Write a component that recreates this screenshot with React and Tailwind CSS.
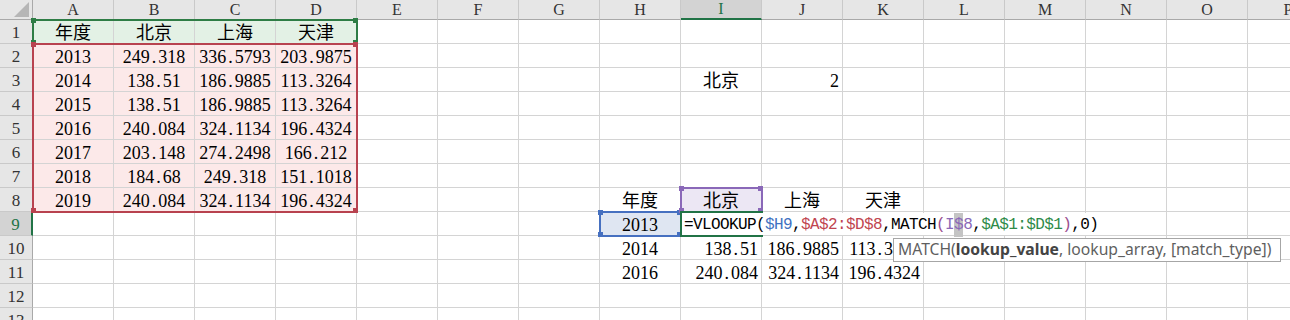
const COLS = ["A", "B", "C", "D", "E", "F", "G", "H", "I", "J", "K", "L", "M", "N", "O", "P"];
const ROWS = [1, 2, 3, 4, 5, 6, 7, 8, 9, 10, 11, 12, 13];

const COL_W = 81;
const ROW_H = 24;
const HEAD_W = 33;
const HEAD_H = 20;

const table = [
  ["年度", "北京", "上海", "天津"],
  ["2013", "249.318", "336.5793", "203.9875"],
  ["2014", "138.51", "186.9885", "113.3264"],
  ["2015", "138.51", "186.9885", "113.3264"],
  ["2016", "240.084", "324.1134", "196.4324"],
  ["2017", "203.148", "274.2498", "166.212"],
  ["2018", "184.68", "249.318", "151.1018"],
  ["2019", "240.084", "324.1134", "196.4324"],
];

const cells = {};
table.forEach((row, r) => {
  row.forEach((v, c) => {
    cells[COLS[c] + (r + 1)] = { v, align: "center", bg: r === 0 ? "bg-[#e3f1e5]" : "bg-[#fce9e9]" };
  });
});
Object.assign(cells, {
  I3: { v: "北京", align: "center" },
  J3: { v: "2", align: "right" },
  H8: { v: "年度", align: "center" },
  I8: { v: "北京", align: "center", bg: "bg-[#ece7f4]" },
  J8: { v: "上海", align: "center" },
  K8: { v: "天津", align: "center" },
  H9: { v: "2013", align: "center", bg: "bg-[#dfe6f2]" },
  H10: { v: "2014", align: "center" },
  I10: { v: "138.51", align: "right" },
  J10: { v: "186.9885", align: "right" },
  K10: { v: "113.3264", align: "right" },
  H11: { v: "2016", align: "center" },
  I11: { v: "240.084", align: "right" },
  J11: { v: "324.1134", align: "right" },
  K11: { v: "196.4324", align: "right" },
});

// coloured boxes that Excel draws round the ranges named in the formula
function RangeBox({ col, row, w, h, color }) {
  const x = HEAD_W + col * COL_W - 1;
  const y = HEAD_H + row * ROW_H - 1;
  const width = w * COL_W + 1;
  const height = h * ROW_H + 1;
  const corners = [
    [x - 1, y - 1],
    [x + width - 4, y - 1],
    [x - 1, y + height - 4],
    [x + width - 4, y + height - 4],
  ];
  return (
    <>
      <div
        className="absolute border-2"
        style={{ left: x, top: y, width: width + 1, height: height + 1, borderColor: color }}
      />
      {corners.map(([cx, cy], i) => (
        <div key={i} className="absolute h-[5px] w-[5px]" style={{ left: cx, top: cy, background: color }} />
      ))}
    </>
  );
}

function Num({ v }) {
  const i = v.indexOf(".");
  if (i < 0) return v;
  return (
    <>
      {v.slice(0, i)}
      <span className="px-[2px]">.</span>
      {v.slice(i + 1)}
    </>
  );
}

function Cell({ id }) {
  const c = cells[id];
  const justify = c?.align === "right" ? "justify-end pr-[3px]" : "justify-center";
  return (
    <div
      className={`flex items-center overflow-hidden whitespace-nowrap border-r border-b border-[#d4d4d4] pt-[2px] text-[18px] leading-none text-black ${justify} ${c?.bg || "bg-white"}`}
    >
      {c && <Num v={c.v} />}
    </div>
  );
}

export default function App() {
  return (
    <div className="relative h-[320px] w-[1290px] overflow-hidden bg-white font-['Liberation_Serif','Noto_Sans_CJK_SC',serif]">
      <div className="grid grid-cols-[33px_repeat(16,81px)] grid-rows-[20px_repeat(13,24px)]">
        {/* select-all corner */}
        <div className="relative border-r border-b border-[#a9a9a9] bg-[#e6e6e6]">
          <svg className="absolute right-[2px] bottom-[2px]" width="16" height="15" viewBox="0 0 16 15">
            <polygon points="15,0 15,15 0,15" fill="#b6b6b6" />
          </svg>
        </div>
        {COLS.map((c) => (
          <div
            key={c}
            className={`flex items-center justify-center border-r border-r-[#c9c9c9] text-[16px] leading-none ${
              c === "I"
                ? "border-b-2 border-b-[#217346] bg-[#d3d3d3] text-[#217346]"
                : "border-b border-b-[#a9a9a9] bg-[#e6e6e6] text-[#333]"
            }`}
          >
            {c}
          </div>
        ))}
        {ROWS.map((r) => (
          <div key={r} className="contents">
            <div
              className={`flex items-center justify-center border-b border-b-[#c9c9c9] pt-[2px] text-[17px] leading-none ${
                r === 9
                  ? "border-r-2 border-r-[#217346] bg-[#d3d3d3] text-[#217346]"
                  : "border-r border-r-[#a9a9a9] bg-[#e6e6e6] text-[#333]"
              }`}
            >
              {r}
            </div>
            {COLS.map((c) => (
              <Cell key={c} id={c + r} />
            ))}
          </div>
        ))}
      </div>

      <RangeBox col={0} row={0} w={4} h={1} color="#2e7d45" />
      <RangeBox col={0} row={1} w={4} h={7} color="#b8424f" />
      <RangeBox col={7} row={8} w={1} h={1} color="#4670c0" />
      <RangeBox col={8} row={7} w={1} h={1} color="#8a68b8" />

      {/* active cell I9 */}
      <div className="absolute left-[680px] top-[211px] h-[26px] w-[83px] border-2 border-[#217346]" />

      {/* in-cell edit of the formula */}
      <div className="absolute left-[682px] top-[213px] flex h-[22px] items-center bg-white pr-[3px] pl-[2px] pt-[1px] font-['Liberation_Mono',monospace] text-[16px] tracking-[-0.6px] text-black">
        <span>=VLOOKUP(</span>
        <span className="text-[#3f72c2]">$H9</span>
        <span>,</span>
        <span className="text-[#c0454f]">$A$2:$D$8</span>
        <span>,MATCH</span>
        <span className="text-[#9a4d8e]">(</span>
        <span className="text-[#8a68b8]">I</span>
        <span className="bg-[#c4c4c4] text-[#8a68b8]">$</span>
        <span className="text-[#8a68b8]">8</span>
        <span>,</span>
        <span className="text-[#2e8a48]">$A$1:$D$1</span>
        <span className="text-[#9a4d8e]">)</span>
        <span>,0)</span>
      </div>

      {/* function tooltip */}
      <div className="absolute left-[893px] top-[238px] flex h-[24px] w-[388px] items-center border border-[#a6a6a6] bg-white px-[4px] font-['Noto_Sans',sans-serif] text-[15.7px] leading-none text-[#5f5f5f]">
        MATCH(<span className="font-bold text-[#444]">lookup_value</span>, lookup_array, [match_type])
      </div>
    </div>
  );
}
